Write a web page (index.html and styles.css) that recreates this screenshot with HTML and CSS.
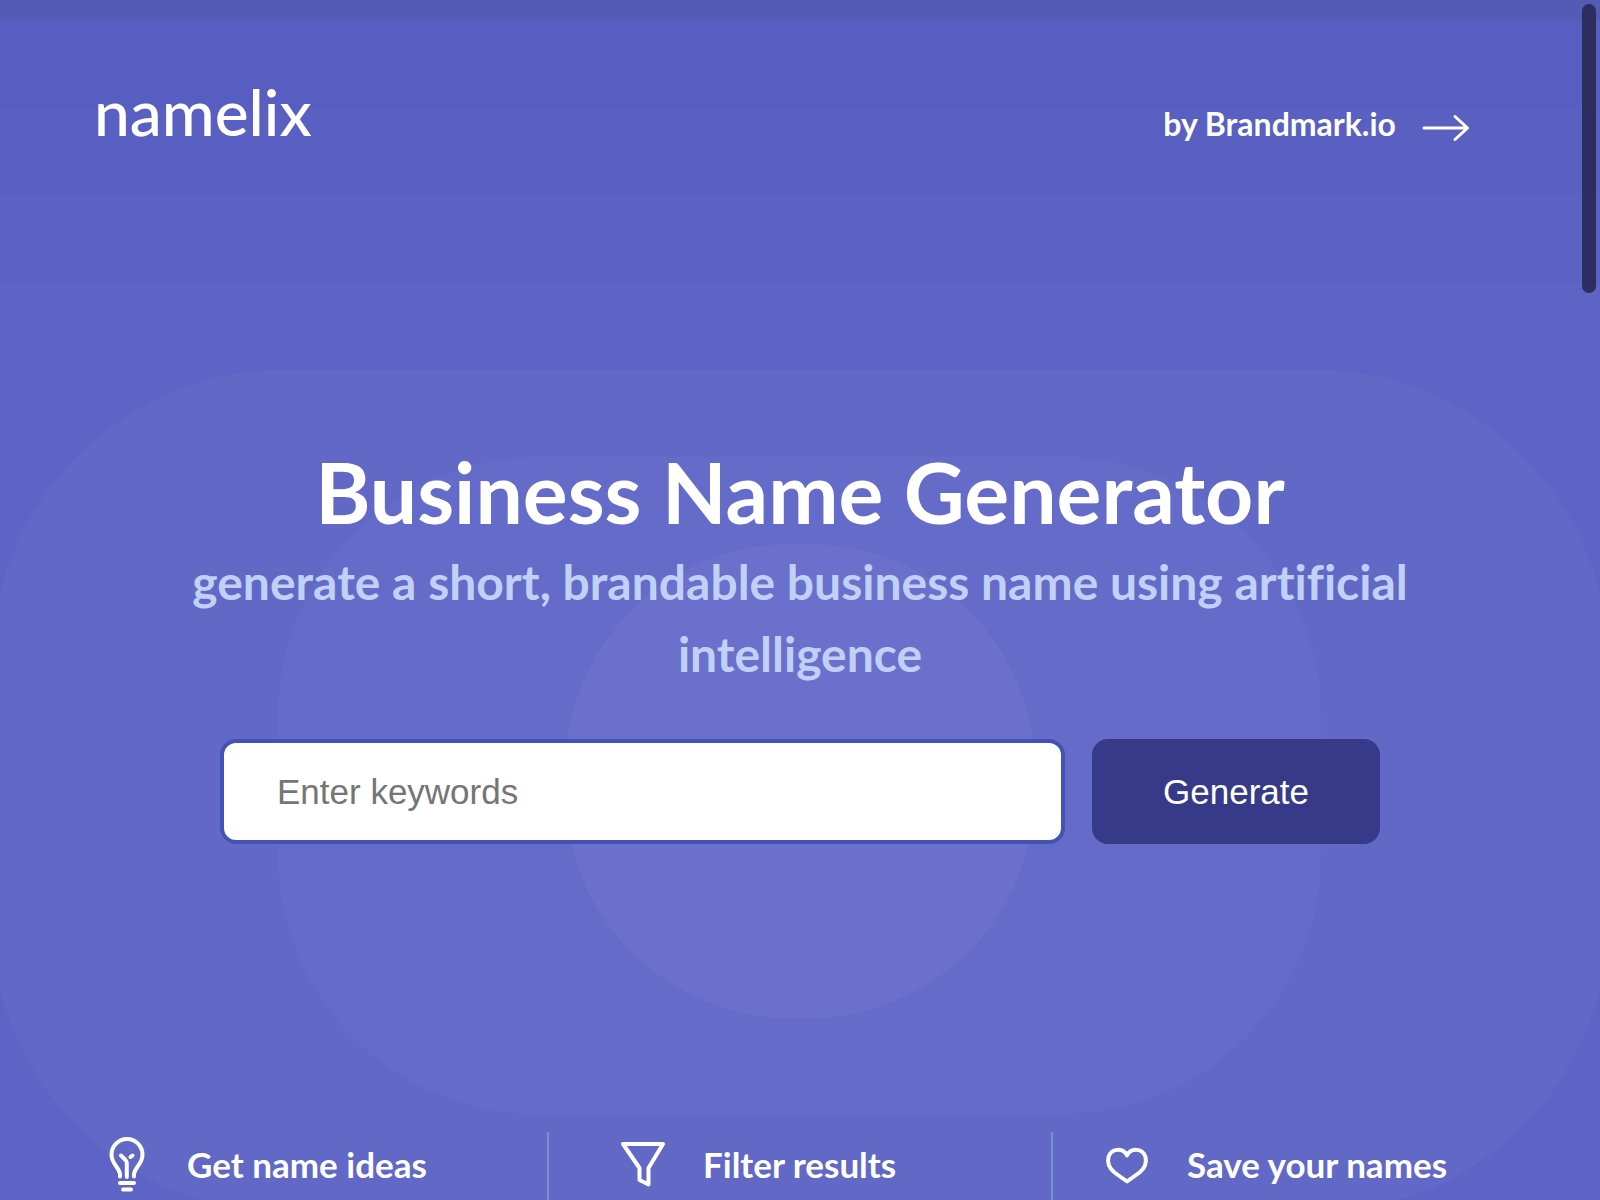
FILE: index.html
```html
<!DOCTYPE html>
<html lang="en">
<head>
  <meta charset="utf-8">
  <meta name="viewport" content="width=device-width, initial-scale=1">
  <title>Namelix: Business Name Generator</title>
  <link rel="stylesheet" href="styles.css">
</head>
<body>
  <div class="page">
    <svg class="backdrop" viewBox="0 0 1600 1200" preserveAspectRatio="none" aria-hidden="true">
      <rect class="band-1" x="0" y="20" width="1600" height="1180"/>
      <rect class="band-2" x="0" y="108" width="1600" height="1092"/>
      <rect class="band-3" x="0" y="195" width="1600" height="1005"/>
      <rect class="band-4" x="0" y="283" width="1600" height="917"/>
      <rect class="ring-outer" x="-8" y="370" width="1616" height="842" rx="292"/>
      <rect class="ring-middle" x="278" y="457" width="1043" height="657" rx="258"/>
      <rect class="ring-inner" x="565" y="544" width="470" height="474" rx="226"/>
    </svg>

    <header class="header">
      <a class="logo" href="#">namelix</a>
      <a class="brandmark" href="#">
        <span>by Brandmark.io</span>
        <svg class="arrow" viewBox="0 0 48 28" aria-hidden="true">
          <path d="M2 14H45M33 2.500L45.500 14L33 25.500"/>
        </svg>
      </a>
    </header>

    <main class="main">
      <h1 class="title">Business Name Generator</h1>
      <p class="subtitle">generate a short, brandable business name using artificial intelligence</p>
      <form class="search">
        <input class="keywords" type="text" placeholder="Enter keywords" aria-label="Enter keywords">
        <button class="generate" type="button">Generate</button>
      </form>
    </main>

    <section class="features">
      <div class="feature feature-ideas">
        <svg class="icon" viewBox="0 0 60 60" aria-hidden="true">
          <path d="M23 41.500V39C22 32 14.500 29 14.500 19.500A15.500 15.500 0 0 1 45.500 19.500C45.500 29 38 32 37 39V41.500"/>
          <path d="M29.800 42V28Q29.800 26 28 24.500L24 20.500M33.500 22L35.500 20.500"/>
          <path d="M23 48H37M26 54.500H34"/>
        </svg>
        <span>Get name ideas</span>
      </div>
      <div class="feature feature-filter">
        <svg class="icon" viewBox="0 0 60 60" aria-hidden="true">
          <path d="M10 9H50L35.500 33V49.500L26.500 45V33Z"/>
        </svg>
        <span>Filter results</span>
      </div>
      <div class="feature feature-save">
        <svg class="icon" viewBox="0 0 60 60" aria-hidden="true">
          <path d="M30 46.500L17.500 37.500C11 32 10.500 26 11.500 22C14 13.500 26 12 30 20.500C34 12 46 13.500 48.500 22C49.500 26 49 32 42.500 37.500Z"/>
        </svg>
        <span>Save your names</span>
      </div>
    </section>
  </div>
  <div class="scroll-thumb" aria-hidden="true"></div>
</body>
</html>
```
FILE: styles.css
```css
* {
  box-sizing: border-box;
}

body {
  margin: 0;
  color: #fff;
  font-family: Lato, "Open Sans", sans-serif;
  font-weight: 700;
  font-variant-ligatures: none;
}

a {
  color: inherit;
  text-decoration: none;
}

.page {
  position: relative;
  display: flex;
  flex-direction: column;
  min-height: 100vh;
  overflow: hidden;
  background: #535bb5;
}

/* Stacked rings behind the content */
.backdrop {
  position: absolute;
  inset: 0;
  width: 100%;
  height: 100%;
}

.band-1 { fill: #585ec1; }
.band-2 { fill: #5a60c2; }
.band-3 { fill: #5c62c3; }
.band-4 { fill: #5e64c5; }
.ring-outer { fill: #6268c6; }
.ring-middle { fill: #656bc8; }
.ring-inner { fill: #6a70cb; }

.header,
.main,
.features {
  position: relative;
}

.header {
  display: flex;
  justify-content: space-between;
  align-items: center;
  height: 248px;
  padding: 0 130px 0 94px;
}

.logo {
  padding-bottom: 24px;
  font-size: 64px;
  line-height: 72px;
  font-weight: 500;
}

.brandmark {
  display: flex;
  align-items: center;
  gap: 26px;
  font-size: 32px;
  line-height: 40px;
}

.arrow {
  width: 48px;
  height: 28px;
  margin-top: 8px;
  fill: none;
  stroke: #fff;
  stroke-width: 3;
  stroke-linecap: round;
  stroke-linejoin: round;
}

.main {
  padding: 192px 160px 288px;
  text-align: center;
}

.title {
  margin: 0 0 2px;
  font-size: 84px;
  line-height: 104px;
  font-weight: 700;
}

.subtitle {
  margin: 0 0 49px;
  color: #c0d0f6;
  font-size: 48px;
  line-height: 72px;
}

.search {
  display: flex;
  gap: 27px;
  padding: 0 60px;
}

.keywords,
.generate {
  height: 105px;
  border-radius: 16px;
  font-family: "Liberation Sans", Arial, sans-serif;
  font-size: 35px;
}

.keywords {
  flex: 1;
  min-width: 0;
  padding: 0 53px;
  border: 4px solid #4452b5;
  background: #fff;
  color: #333;
}

.keywords::placeholder {
  color: #757575;
  opacity: 1;
}

.generate {
  width: 288px;
  border: 0;
  background: #373a89;
  color: #fff;
}

.features {
  flex: 1;
  display: grid;
  grid-template-columns: repeat(3, 1fr);
  min-height: 68px;
  padding: 0 45px 0 43px;
}

.feature {
  display: flex;
  align-items: flex-start;
  gap: 30px;
  font-size: 35px;
  line-height: 64px;
}

.feature + .feature {
  border-left: 2px solid #7591c9;
}

.feature-ideas { padding-left: 54px; }
.feature-filter { padding-left: 64px; }
.feature-save { padding-left: 44px; }

.icon {
  width: 60px;
  height: 60px;
  margin-top: 3px;
  fill: none;
  stroke: #fff;
  stroke-width: 4;
  stroke-linecap: round;
  stroke-linejoin: round;
}

/* Overlay scrollbar */
.scroll-thumb {
  position: fixed;
  top: 4px;
  right: 4px;
  width: 14px;
  height: 289px;
  border-radius: 7px;
  background: #2d2e5f;
}
```
